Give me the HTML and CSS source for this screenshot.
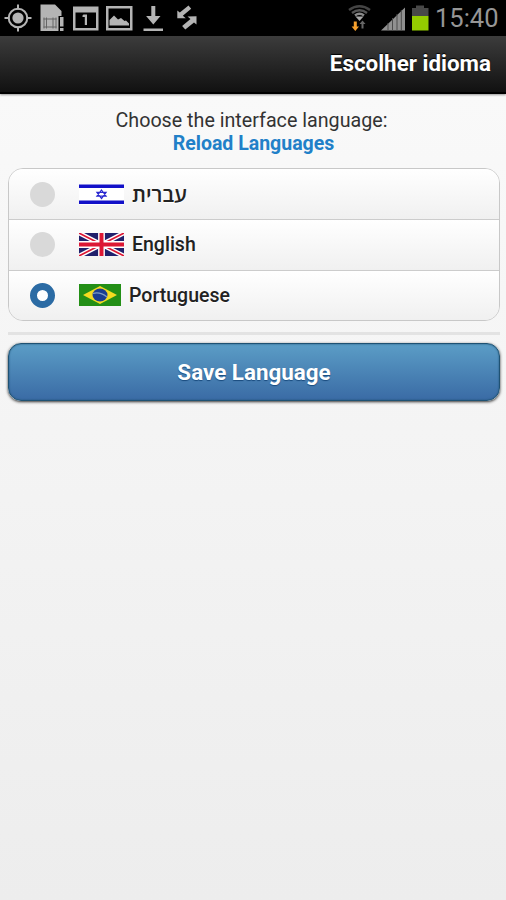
FILE: index.html
```html
<!DOCTYPE html>
<html lang="pt-br">
<head>
    <meta charset="UTF-8">
    <meta name="viewport" content="width=device-width, initial-scale=1.0">
    <title>Escolher idioma</title>
    <link rel="stylesheet" href="styles.css">
</head>
<body>
    <div class="status-bar">
        <svg class="status-icons" width="210" height="36" viewBox="0 0 210 36" fill="#b4b4b4">
            <!-- GPS -->
            <g fill="none" stroke="#b4b4b4" stroke-width="2">
                <circle cx="18" cy="18" r="9.3"/>
                <path d="M18 4.500v5M18 26.500v5M4.500 18h5M26.500 18h5"/>
            </g>
            <circle cx="18" cy="18" r="5.600"/>
            <!-- SIM card -->
            <path d="M40.500 4.500H55L61.500 11V16H58.500V31H40.500Z"/>
            <path d="M60 17h3.500v9.500H60zM60 28h3.500v3H60z"/>
            <path d="M44 17.500v11M46.500 17.500v11M53 17.500v11M56 17.500v11M43.500 19h13M43.500 27h13" fill="none" stroke="#666" stroke-width="1"/>
            <!-- Calendar -->
            <path fill-rule="evenodd" d="M73 6.500h25.500V30.500H73zM75.500 12.500V28H96V12.500z"/>
            <path d="M82.500 15.500l1-1h3.500V25h-2.200v-8h-2.300z"/>
            <!-- Picture -->
            <path fill-rule="evenodd" d="M106 6h26.500v24.500H106zM108.500 8.500V28H130V8.500z"/>
            <path d="M109.500 25.500V20l4.500-4.500 4 4 3-1.500 3.500 3 1.500-.5 3 3v2z"/>
            <!-- Download -->
            <path d="M151.300 6h4v10h5.200l-7.200 8.500-7.200-8.500h5.200zM143.500 28.500h19.500v2.500h-19.500z"/>
            <!-- Sync -->
            <path d="M177.300 18.300V10.500l2.500 2 8.700-7 2.700 3.300-8.400 7 3 2.500z"/>
            <path d="M196.500 16.200V24.500l-2.500-2-8.700 7-3.200-3.500 8.400-7-3-2.500z"/>
        </svg>
        <div class="status-right">
            <svg width="90" height="36" viewBox="344 0 90 36">
                <!-- Wi-Fi -->
                <g fill="none" stroke-width="2.500">
                    <path d="M349 10Q359.500 2.500 370 10" stroke="#444"/>
                    <path d="M352 13Q359.500 7.500 367 13" stroke="#555"/>
                    <path d="M355 15.500Q359.500 12 364 15.500" stroke="#888"/>
                </g>
                <path d="M355.500 16.500h8l-4 4.500z" fill="#aaa"/>
                <path d="M353.800 21.500h3v5h2.200l-3.700 4.500-3.700-4.500h2.200z" fill="#f6a02d"/>
                <path d="M361.500 28.500v-4.500h-2l3-3.500 3 3.500h-2v4.500z" fill="#666"/>
                <!-- Signal -->
                <path d="M381 30.500L405 7.500V30.500z" fill="#909090"/>
                <path d="M388 23v8M392.500 18v13M397 14v17M401.300 10v21" stroke="#4c4c4c" stroke-width="1"/>
                <!-- Battery -->
                <path d="M412 8h4V5.500h8V8h4.500v8H412z" fill="#484848"/>
                <path d="M412 16h16.500v14.500H412z" fill="#94cc00"/>
            </svg>
            <span class="clock">15:40</span>
        </div>
    </div>

    <div class="header">
        <h1>Escolher idioma</h1>
    </div>

    <form class="content">
        <p class="intro">Choose the interface language:</p>
        <a class="reload" href="#">Reload Languages</a>

        <div class="language-list">
            <label class="language">
                <input type="radio" name="language" value="he">
                <svg class="flag" width="45" height="21" viewBox="0 0 45 21">
                    <rect width="45" height="21" fill="#fff"/>
                    <path d="M0 2.300h45M0 18.300h45" stroke="#1210c8" stroke-width="3.400"/>
                    <path d="M22.500 6l4.600 6.200h-9.200zM22.500 14.600l4.600-6.200h-9.200z" fill="none" stroke="#2a28d0" stroke-width="1.200"/>
                </svg>
                <span class="hebrew">עברית</span>
            </label>
            <label class="language">
                <input type="radio" name="language" value="en">
                <svg class="flag" width="45" height="23" viewBox="0 0 45 23">
                    <rect width="45" height="23" fill="#20206c"/>
                    <path d="M0 0L45 23M45 0L0 23" stroke="#fff" stroke-width="4.600"/>
                    <path d="M0 0L45 23M45 0L0 23" stroke="#dc1734" stroke-width="1.600"/>
                    <path d="M22.500 0v23M0 11.500h45" stroke="#fff" stroke-width="6.800"/>
                    <path d="M22.500 0v23M0 11.500h45" stroke="#dc1734" stroke-width="4"/>
                </svg>
                <span>English</span>
            </label>
            <label class="language">
                <input type="radio" name="language" value="pt" checked>
                <svg class="flag" width="42" height="22" viewBox="0 0 42 22">
                    <rect width="42" height="22" fill="#238f16"/>
                    <path d="M4 11L21 2l17 9-17 9z" fill="#f4dc20"/>
                    <ellipse cx="21" cy="11" rx="7.500" ry="6.500" fill="#1b3f91"/>
                    <path d="M14 9.500Q21 7.500 28 13" fill="none" stroke="#7f9cc4" stroke-width="1.200"/>
                </svg>
                <span>Portuguese</span>
            </label>
        </div>

        <hr class="divider">
        <button type="button" class="save-btn">Save Language</button>
    </form>
</body>
</html>
```

FILE: styles.css
```css
* {
    margin: 0;
    padding: 0;
    box-sizing: border-box;
    font-family: Roboto, "Open Sans", "Noto Sans", sans-serif;
}

body {
    min-height: 900px;
    background: linear-gradient(#f9f9f9 94px, #ededed 900px);
    color: #333;
}

.status-bar {
    display: flex;
    justify-content: space-between;
    height: 36px;
    background-color: #000;
}

.status-right {
    display: flex;
    padding-right: 8px;
}

.clock {
    width: 64px;
    padding-left: 1px;
    font-size: 25.5px;
    line-height: 36px;
    color: #969696;
    white-space: nowrap;
}

.header {
    height: 58px;
    padding: 0 15px;
    background: linear-gradient(#3c3c3c, #111);
    border-bottom: 2px solid #000;
    box-shadow: 0 1px 2px rgba(0,0,0,0.4);
    text-align: right;
}

.header h1 {
    font-size: 22.4px;
    line-height: 55px;
    color: #fff;
    text-shadow: 0 -1px 1px #000;
}

.content {
    padding: 15px 6px 0 8px;
    text-align: center;
}

.intro {
    padding-right: 5px;
    font-size: 19.7px;
    line-height: 23px;
}

.reload {
    display: block;
    padding-right: 1px;
    font-size: 19.5px;
    font-weight: bold;
    line-height: 23px;
    color: #2180c8;
    text-decoration: none;
}

.language-list {
    margin-top: 13px;
    border: 1px solid #c8c8c8;
    border-radius: 15px;
    overflow: hidden;
}

.language {
    display: flex;
    align-items: center;
    height: 50.5px;
    padding-left: 21px;
    background: linear-gradient(#fff, #f0f0f0);
    font-size: 19.5px;
    font-weight: 500;
    color: #222;
    text-shadow: 0 1px 0 #fff;
}

.language:first-child {
    height: 50px;
}

.language + .language {
    border-top: 1px solid #ccc;
}

.language input {
    appearance: none;
    width: 25px;
    height: 25px;
    border-radius: 50%;
    background-color: #d9d9d9;
}

.language input:checked {
    border: 7px solid #2b6ba4;
    background-color: #fff;
}

.flag {
    margin: 0 8px 0 24px;
}

.hebrew {
    font-family: "Open Sans", "DejaVu Sans", sans-serif;
    font-size: 21px;
    font-weight: 600;
}

.divider {
    height: 3px;
    margin-top: 11px;
    border: none;
    background-color: #e3e3e3;
}

.save-btn {
    display: block;
    width: 100%;
    height: 58px;
    margin-top: 8px;
    border: 1px solid #1f5273;
    border-radius: 13px;
    background: linear-gradient(#5b9dc6, #3a6ba5);
    box-shadow: inset 0 0 2px #1f5273, 0 1px 3px rgba(0,0,0,0.8);
    font-size: 22.4px;
    font-weight: bold;
    color: #fff;
    text-shadow: 0 1px 1px #194b7e;
}
```
